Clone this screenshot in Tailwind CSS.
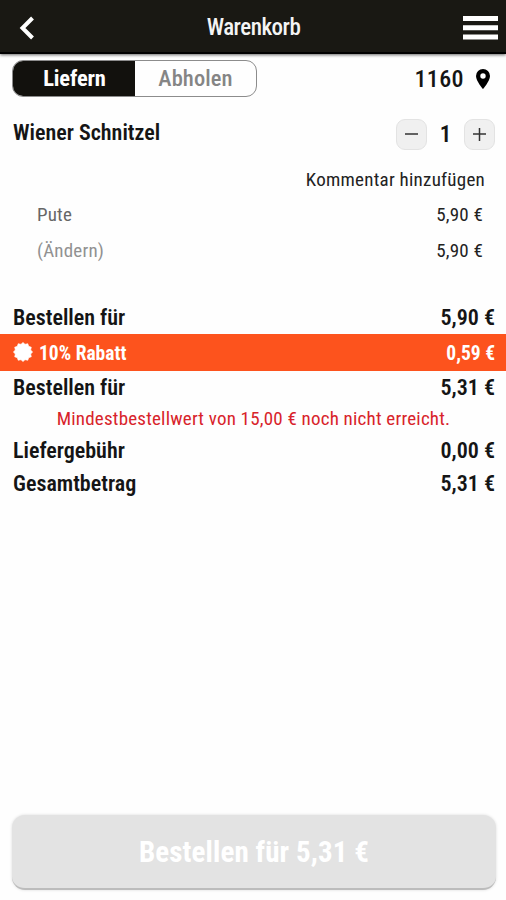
<!DOCTYPE html>
<html lang="de">
<head>
    <meta charset="UTF-8">
    <meta name="viewport" content="width=device-width, initial-scale=1.0">
    <title>Warenkorb</title>
    <script src="https://cdn.jsdelivr.net/npm/@tailwindcss/browser@4"></script>
</head>
<body class="h-screen flex flex-col bg-[#fefefe] text-[#151515] overflow-hidden font-['Roboto_Condensed',Roboto,sans-serif] [font-stretch:75%]">
    <!-- Kopfzeile -->
    <header class="h-[54px] shrink-0 flex items-center justify-between bg-[#191813] border-b-2 border-black shadow-[0_1px_3px_rgba(0,0,0,0.6)] pl-[19px] pr-2 pt-[4px]">
        <button class="w-[35px]" aria-label="Zurück">
            <svg class="w-4 h-6" viewBox="0 0 16 24" fill="none" stroke="#fff" stroke-width="4"><path d="M13.5 2 3.5 12l10 10"/></svg>
        </button>
        <h1 class="text-[23px] tracking-[-0.5px] font-medium text-[#f4f4f4] whitespace-nowrap pr-[10px]">Warenkorb</h1>
        <button class="w-[35px]" aria-label="Menü">
            <svg class="w-[35px] h-6" viewBox="0 0 35 24" fill="#fff"><path d="M0 0h35v5H0zM0 9.3h35v5H0zM0 18.6h35v5H0z"/></svg>
        </button>
    </header>

    <!-- Lieferart und PLZ -->
    <div class="mt-[6px] h-[37px] flex items-center justify-between pl-3 pr-[15px]">
        <div class="w-[245px] h-[37px] flex rounded-[11px] border border-[#8c8c8c] overflow-hidden text-[22.5px]">
            <button class="w-[122px] bg-[#12110d] text-white font-bold tracking-[-0.15px] pl-px pt-px">Liefern</button>
            <button class="flex-1 text-[#858585] font-medium tracking-[0.1px] pt-px">Abholen</button>
        </div>
        <div class="flex items-center gap-[11px] text-[24px] font-medium tracking-[0.4px] pt-px">
            1160
            <svg class="w-4 h-5 mb-px" viewBox="0 0 16 20" fill="#000"><path fill-rule="evenodd" d="M8 0a7 7 0 0 0-7 7c0 5 7 13 7 13s7-8 7-13a7 7 0 0 0-7-7Zm0 4.3a2.7 2.7 0 1 1 0 5.4 2.7 2.7 0 0 1 0-5.4Z"/></svg>
        </div>
    </div>

    <!-- Artikel -->
    <section class="mt-[21px] h-[183px]">
        <div class="h-8 flex justify-between pl-[13px] pr-[11px]">
            <h2 class="text-[22px] leading-[29px] font-semibold">Wiener Schnitzel</h2>
            <div class="flex items-center text-[23px] font-semibold">
                <button class="size-[31px] flex items-center justify-center rounded-[9px] bg-[#f0f0f0] border border-[#e3e3e3]" aria-label="Weniger">
                    <svg class="size-[13px]" viewBox="0 0 13 13" stroke="#333" stroke-width="1.5"><path d="M0 6h13"/></svg>
                </button>
                <span class="w-[37px] text-center pt-[3px]">1</span>
                <button class="size-[31px] flex items-center justify-center rounded-[9px] bg-[#f0f0f0] border border-[#e3e3e3]" aria-label="Mehr">
                    <svg class="size-[13px]" viewBox="0 0 13 13" stroke="#333" stroke-width="1.5"><path d="M0 6h13M6.5 0v13"/></svg>
                </button>
            </div>
        </div>
        <p class="mt-[11px] h-[36px] leading-[37px] pr-[21px] text-right text-[19px] tracking-[0.25px] text-[#222]">Kommentar hinzufügen</p>
        <div class="h-[35px] leading-[35px] flex justify-between pl-[37px] pr-[23px] text-[19px] tracking-[0.2px]">
            <span class="text-[#666]">Pute</span><span class="text-[#222]">5,90 €</span>
        </div>
        <div class="h-[36px] leading-[37px] flex justify-between pl-[37px] pr-[23px] text-[19px] tracking-[0.2px]">
            <span class="text-[#919191]">(Ändern)</span><span class="text-[#222]">5,90 €</span>
        </div>
    </section>

    <!-- Summen -->
    <section class="text-[22px] font-semibold">
        <div class="h-[33px] leading-[34px] flex justify-between pl-[13px] pr-[11px]"><span>Bestellen für</span><span>5,90 €</span></div>
        <div class="h-[37px] flex items-center justify-between pl-[13px] pr-[11px] pt-[2px] bg-[#fd531d] text-white text-[19.5px] font-bold">
            <span class="flex items-center gap-[6px]">
                <svg class="size-5 mb-[3px]" viewBox="-10 -10 20 20" fill="#fff" stroke="#fff" stroke-width="0.6" stroke-linejoin="round">
                    <path d="M0-9.6 2-7.7 4.8-8.3 5.7-5.7 8.3-4.8 7.7-2 9.6 0 7.7 2 8.3 4.8 5.7 5.7 4.8 8.3 2 7.7 0 9.6-2 7.7-4.8 8.3-5.7 5.7-8.3 4.8-7.7 2-9.6 0-7.7-2-8.3-4.8-5.7-5.7-4.8-8.3-2-7.7Z"/>
                </svg>
                10% Rabatt
            </span>
            <span>0,59 €</span>
        </div>
        <div class="h-[32px] leading-[33px] flex justify-between pl-[13px] pr-[11px]"><span>Bestellen für</span><span>5,31 €</span></div>
        <p class="h-[31px] leading-[32px] pl-px text-center text-[19px] font-normal tracking-[0.2px] text-[#d8232a]">Mindestbestellwert von 15,00 € noch nicht erreicht.</p>
        <div class="h-[33px] leading-[33px] flex justify-between pl-[13px] pr-[11px]"><span>Liefergebühr</span><span>0,00 €</span></div>
        <div class="h-[33px] leading-[33px] flex justify-between pl-[13px] pr-[11px]"><span>Gesamtbetrag</span><span>5,31 €</span></div>
    </section>

    <button class="mt-auto mb-[10px] ml-3 mr-[10px] h-[75px] shrink-0 rounded-[13px] bg-[#e3e3e3] border-b-2 border-[#bcbcbc] shadow-[0_0_3px_rgba(0,0,0,0.15)] text-white text-[29px] font-bold tracking-[0.1px] pt-[2px]">Bestellen für 5,31 €</button>
</body>
</html>
